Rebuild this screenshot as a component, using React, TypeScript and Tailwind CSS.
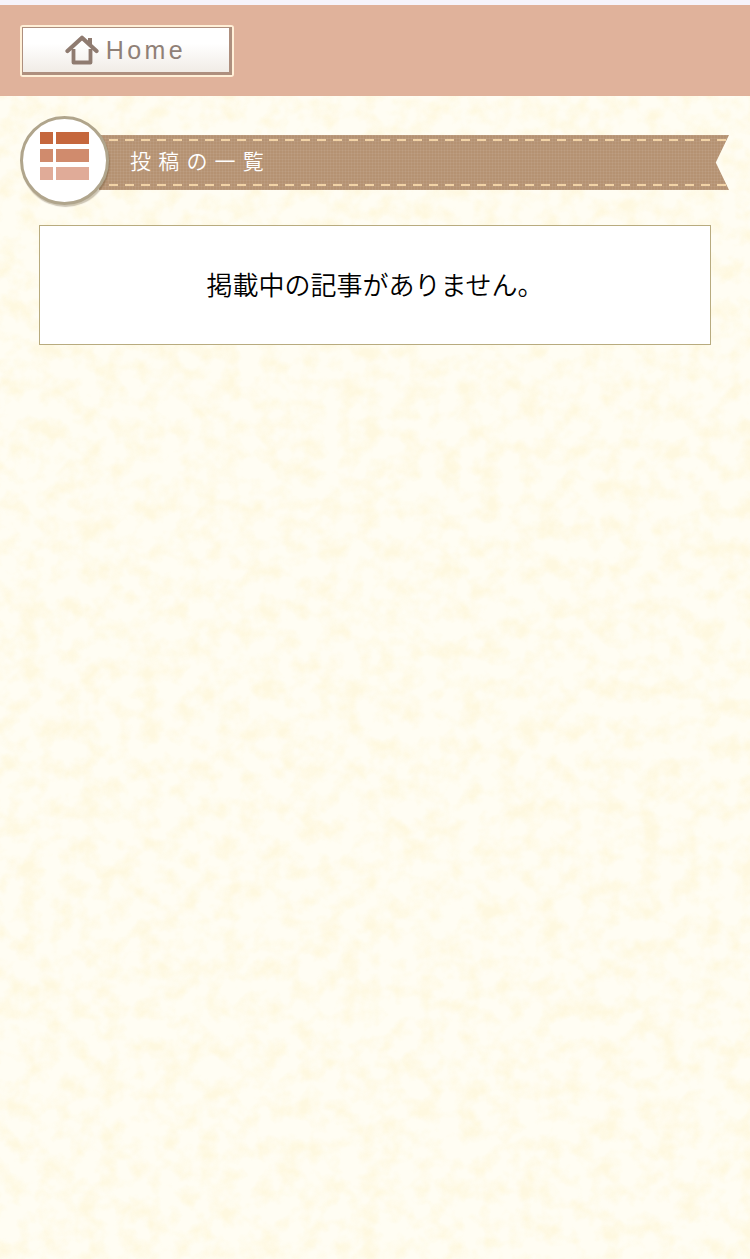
import React from 'react';

const HomeIcon = () => (
  <svg width="34" height="30" viewBox="0 0 34 30" className="shrink-0">
    <path d="M8.5 14 V27.5 H25.5 V14" fill="none" stroke="#8f7b70" strokeWidth="3.8" strokeLinejoin="round" />
    <path d="M23 3 H27 V12 L23 8 Z" fill="#8f7b70" />
    <path d="M2.5 16 L17 2.8 L31.5 16" fill="none" stroke="#8f7b70" strokeWidth="4.2" strokeLinecap="round" strokeLinejoin="round" />
  </svg>
);

const ListIcon = () => (
  <div className="grid grid-cols-[13px_33px] gap-x-[3px] gap-y-[5px] mb-[9px]">
    <div className="h-[12px] bg-[#c5673d]" />
    <div className="h-[12px] bg-[#c5673d]" />
    <div className="h-[13px] bg-[#d08b6d]" />
    <div className="h-[13px] bg-[#d08b6d]" />
    <div className="h-[13px] bg-[#e0ab98]" />
    <div className="h-[13px] bg-[#e0ab98]" />
  </div>
);

// paper grain behind everything
const PaperTexture = () => (
  <svg className="absolute inset-0 w-full h-full pointer-events-none">
    <filter id="paper" x="0" y="0" width="100%" height="100%">
      <feTurbulence type="fractalNoise" baseFrequency="0.05" numOctaves="3" seed="11" />
      <feColorMatrix values="0 0 0 0 0.99  0 0 0 0 0.91  0 0 0 0 0.64  2.6 0 0 0 -1.05" />
    </filter>
    <rect width="100%" height="100%" filter="url(#paper)" opacity="0.55" />
  </svg>
);

const Stitches = () => (
  <div className="h-[2px] bg-[repeating-linear-gradient(90deg,#f2d3a6_0_9px,transparent_9px_16px)]" />
);

export default function App() {
  return (
    <div className="relative flex flex-col h-[1259px] w-[750px] overflow-hidden bg-[#fffdf3] font-['Noto_Sans_CJK_JP',sans-serif]">
      <PaperTexture />

      <div className="relative h-[5px] bg-[#f6f4fb]" />

      <header className="relative flex items-center h-[91px] px-5 bg-[#e0b29b]">
        <button
          type="button"
          className="w-[214px] h-[52px] rounded-[3px] border-2 border-[#fff0d8]"
        >
          <div className="flex items-center justify-center gap-[7px] h-full pr-[1px] border border-r-[3px] border-b-[3px] border-[#ae8f7e] bg-[linear-gradient(#ffffff_35%,#f1ece6)]">
            <HomeIcon />
            <span className="mt-[1px] font-['Liberation_Sans',sans-serif] text-[25px] leading-none tracking-[3.4px] text-[#8f8077]">Home</span>
          </div>
        </button>
      </header>

      <main className="relative flex flex-col pt-5">
        <div className="flex items-center pl-5 pr-[21px]">
          <div className="relative z-10 flex items-center justify-center shrink-0 w-[89px] h-[89px] rounded-full bg-white border-[3px] border-[#b0a58c] shadow-[1px_2px_1px_rgba(90,70,40,0.3)]">
            <ListIcon />
          </div>
          <div className="flex flex-col justify-between flex-1 h-[55px] mt-[4px] -ml-[10px] pl-[10px] py-[4px] bg-[#b59272] bg-[repeating-linear-gradient(90deg,rgba(255,255,255,0.06)_0_1px,transparent_1px_3px),repeating-linear-gradient(0deg,rgba(255,255,255,0.06)_0_1px,transparent_1px_3px)] [clip-path:polygon(0_0,100%_0,97.9%_50%,100%_100%,0_100%)]">
            <Stitches />
            <span className="pl-[21px] -mt-[4px] text-[21px] leading-none font-[350] tracking-[7.2px] text-white">投稿の一覧</span>
            <Stitches />
          </div>
        </div>

        <div className="flex items-center justify-center h-[120px] mx-[39px] mt-5 bg-white border border-[#b8ab7f]">
          <p className="-mt-[3px] text-[26px] leading-none font-[350] text-[#000000]">掲載中の記事がありません。</p>
        </div>
      </main>
    </div>
  );
}
